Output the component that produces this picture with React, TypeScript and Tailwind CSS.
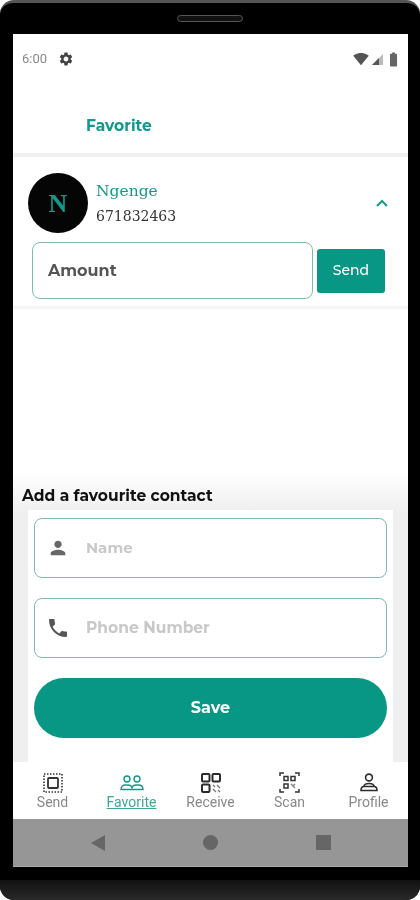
import { MdBatteryFull, MdPerson, MdPhone, MdSettings, MdSignalWifi4Bar } from "react-icons/md";

const TEAL = "text-[#12998a]";

function NavIcon({ name }: { name: string }) {
  if (name === "Send") {
    return (
      <svg width="20" height="20" viewBox="0 0 20 20" fill="none" stroke="#333">
        <rect x="1" y="1" width="18" height="18" strokeWidth="1.6" strokeDasharray="1.5 1.5" />
        <rect x="5" y="5" width="10" height="10" rx="1" strokeWidth="1.8" />
      </svg>
    );
  }
  if (name === "Favorite") {
    return (
      <svg width="24" height="16" viewBox="0 0 24 16" fill="none" stroke="#12998a" strokeWidth="1.4">
        <circle cx="7" cy="4" r="3" />
        <circle cx="17" cy="4" r="3" />
        <path d="M1 14.500c0-3 2-4.500 4.500-4.500h2.500c2 0 3.500 1 4 2.500.5-1.500 2-2.500 4-2.500h2.500c2.500 0 4.500 1.500 4.500 4.500z" />
      </svg>
    );
  }
  if (name === "Receive") {
    return (
      <svg width="20" height="20" viewBox="0 0 20 20" fill="none" stroke="#2b2b2b" strokeWidth="2">
        <rect x="1" y="1" width="7.500" height="7.500" rx="1" />
        <rect x="11.500" y="1" width="7.500" height="7.500" rx="1" />
        <rect x="1" y="11.500" width="7.500" height="7.500" rx="1" />
        <path d="M12 12l2 2m2-2l3 3m-7 1l3 3m2-2l2 2" strokeWidth="1.300" stroke="#777" />
      </svg>
    );
  }
  if (name === "Scan") {
    return (
      <svg width="21" height="21" viewBox="0 0 21 21" fill="none" stroke="#333" strokeWidth="1.500">
        <path d="M1 4V1h4M16 1h4v3M1 17v3h4M16 20h4v-3" />
        <rect x="5" y="4.500" width="4" height="4" />
        <rect x="12" y="4.500" width="4" height="4" />
        <rect x="5" y="12" width="4" height="4" />
        <path d="M12 12l4 4m0-4l-1.500 1.500" stroke="#888" />
      </svg>
    );
  }
  return (
    <svg width="18" height="19" viewBox="0 0 18 19" fill="none" stroke="#2b2b2b" strokeWidth="1.600">
      <circle cx="9" cy="4.500" r="3.400" />
      <path d="M4 13.500c0-2 2-3 5-3s5 1 5 3" />
      <path d="M1 17.500h16c0-2.500-1-4-3-4H4c-2 0-3 1.500-3 4z" />
    </svg>
  );
}

const navItems = ["Send", "Favorite", "Receive", "Scan", "Profile"];

export default function App() {
  return (
    <div className="h-[900px] w-[420px] overflow-hidden bg-white font-['Montserrat','Inter',sans-serif]">
      <div className="flex h-[900px] flex-col overflow-hidden rounded-[14px] border-t-[3px] border-[#555] bg-black blur-[0.4px]">
        {/* Phone bezel */}
        <div className="flex h-[31px] shrink-0 items-center justify-center">
          <div className="h-[7px] w-[66px] rounded-full border border-[#555] bg-[#111]" />
        </div>

        <div className="ml-[13px] flex h-[833px] w-[395px] shrink-0 flex-col overflow-hidden bg-white">
          {/* Status bar */}
          <div className="flex h-[50px] shrink-0 items-center justify-between pl-[9px] pr-[6px]">
            <div className="flex items-center gap-[11px]">
              <span className="font-['Roboto',sans-serif] text-[13px] text-[#888]">6:00</span>
              <MdSettings size={16} color="#444" />
            </div>
            <div className="flex items-center">
              <MdSignalWifi4Bar size={16} color="#555" />
              <svg width="13" height="13" viewBox="0 0 13 13" className="ml-[2px]">
                <path d="M12 1v11H1z" fill="#bbb" />
                <path d="M8 5v7H1z" fill="#555" />
              </svg>
              <MdBatteryFull size={17} color="#666" className="ml-[1px]" />
            </div>
          </div>

          {/* Title bar */}
          <div className="flex h-[69px] shrink-0 items-center pl-[73px] pt-[14px]">
            <span className={`text-[15.500px] font-bold ${TEAL}`}>Favorite</span>
          </div>
          <div className="h-[4px] shrink-0 bg-[#f1f1f1]" />

          {/* Contact card */}
          <div className="flex shrink-0 flex-col border-b-[3px] border-[#f5f5f5] pb-[7px]">
            <div className="flex items-center pl-[15px] pr-[19px] pt-[16px]">
              <div className="flex h-[60px] w-[60px] items-center justify-center rounded-full bg-[#050505]">
                <span className={`font-['Liberation_Serif',serif] text-[26px] font-bold ${TEAL}`}>N</span>
              </div>
              <div className="ml-[8px] flex flex-1 flex-col font-['DejaVu_Serif',serif]">
                <span className={`text-[15.500px] leading-[24px] ${TEAL}`}>Ngenge</span>
                <span className="mt-[1px] text-[14px] leading-[24px] text-[#333]">671832463</span>
              </div>
              <svg width="14" height="10" viewBox="0 0 14 10" fill="none" stroke="#12998a" strokeWidth="2">
                <path d="M2 8l5-5 5 5" />
              </svg>
            </div>
            <div className="mt-[9px] flex items-center pl-[19px] pr-[23px]">
              <div className="flex h-[57px] w-[281px] items-center rounded-[8px] border border-[#7dbbae] pl-[15px]">
                <span className="text-[16px] font-bold text-[#555]">Amount</span>
              </div>
              <div className="ml-[4px] flex h-[44px] flex-1 items-center justify-center rounded-[3px] bg-[#079784] text-[14px] font-medium text-white">
                Send
              </div>
            </div>
          </div>

          <div className="flex-1" />

          {/* Add favourite form */}
          <div className="flex h-[286px] shrink-0 flex-col bg-[linear-gradient(#fdfdfd,#efefef_36px)]">
            <h2 className="pl-[9px] pt-[10px] text-[15.500px] font-bold leading-[20px] text-[#111]">Add a favourite contact</h2>
            <div className="mx-[15px] mt-[4px] flex flex-1 flex-col bg-white px-[6px] pt-[8px]">
              <div className="flex h-[60px] items-center rounded-[8px] border border-[#7dbbae] pl-[12px]">
                <MdPerson size={22} color="#666" />
                <span className="ml-[17px] text-[15px] font-bold text-[#c8c8c8]">Name</span>
              </div>
              <div className="mt-[20px] flex h-[60px] items-center rounded-[8px] border border-[#7dbbae] pl-[11px]">
                <MdPhone size={24} color="#555" />
                <span className="ml-[16px] text-[15.500px] font-bold text-[#c8c8c8]">Phone Number</span>
              </div>
              <div className="mt-[20px] flex h-[60px] items-center justify-center rounded-[30px] bg-[#079784] text-[16px] font-bold text-white">
                Save
              </div>
            </div>
          </div>

          {/* Bottom tabs */}
          <div className="flex h-[57px] shrink-0 bg-white">
            {navItems.map((name) => (
              <div key={name} className="flex flex-1 flex-col items-center pt-[10px]">
                <div className="flex h-[21px] items-center">
                  <NavIcon name={name} />
                </div>
                <span
                  className={`font-['Roboto',sans-serif] text-[14px] leading-[18px] ${
                    name === "Favorite" ? "text-[#3aa898] underline" : "text-[#888]"
                  }`}
                >
                  {name}
                </span>
              </div>
            ))}
          </div>

          {/* Android nav bar */}
          <div className="flex h-[48px] shrink-0 items-center justify-center gap-[98px] border-b border-[#aaa] bg-[#969696]">
            <div className="h-0 w-0 border-y-[8px] border-r-[14px] border-y-transparent border-r-[#666]" />
            <div className="h-[15px] w-[15px] rounded-full bg-[#666]" />
            <div className="h-[15px] w-[15px] bg-[#666]" />
          </div>
        </div>

        {/* Bottom bezel */}
        <div className="mt-[13px] flex-1 bg-gradient-to-b from-[#111] to-[#2a2a2a]" />
      </div>
    </div>
  );
}
